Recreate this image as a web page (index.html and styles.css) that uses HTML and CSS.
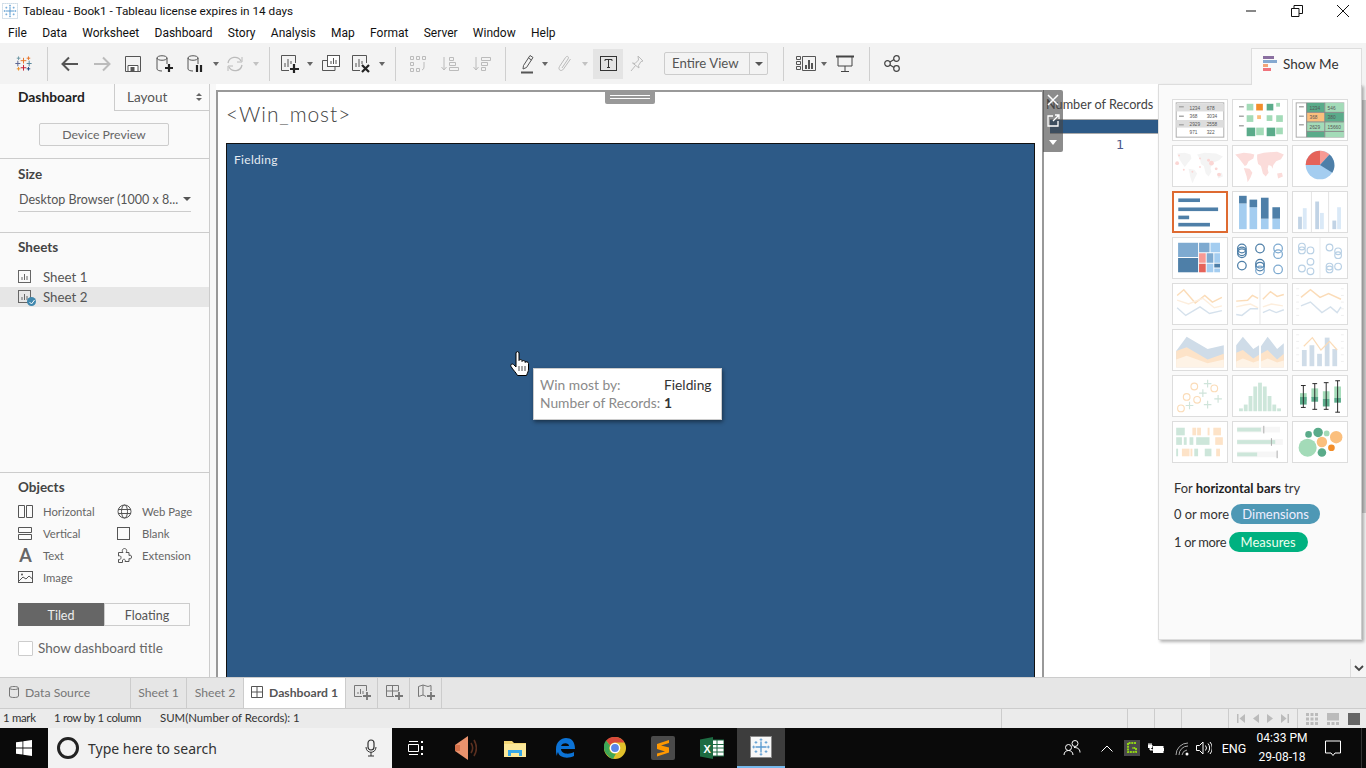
FILE: index.html
```html
<!DOCTYPE html>
<html lang="en">
<head>
<meta charset="utf-8">
<title>Tableau - Book1</title>
<link rel="stylesheet" href="styles.css">
</head>
<body>
<svg class="defs" width="0" height="0">
  <defs>
    <symbol id="sheetico" viewBox="0 0 14 14"><rect x=".5" y=".5" width="12" height="12" fill="none" stroke="#666"/><path d="M4 10V7M6.500 10V4M9 10V6" stroke="#666" fill="none"/></symbol>
    <symbol id="flake" viewBox="0 0 24 24">
      <g fill="none" stroke="#5b9bd0"><path d="M12 6v12M6 12h12" stroke-width="1.500"/><path d="M12 2.500v3M10.500 4h3M12 18.500v3M10.500 20h3M2.500 12h3M4 10.500v3M18.500 12h3M20 10.500v3M6.500 5.500v3M5 7h3M17.500 5.500v3M16 7h3M6.500 15.500v3M5 17h3M17.500 15.500v3M16 17h3"/></g>
    </symbol>
  </defs>
</svg>

<header class="titlebar">
  <svg class="appicon" width="16" height="16" viewBox="0 0 24 24"><rect x=".7" y=".7" width="22.600" height="22.600" fill="#fff" stroke="#9db9cf" stroke-dasharray="2 1"/><use href="#flake"/></svg>
  <span class="apptitle">Tableau - Book1 - Tableau license expires in 14 days</span>
  <div class="winbtns">
    <span class="winbtn"><svg width="12" height="12" viewBox="0 0 12 12"><path d="M1 6h10" stroke="#111"/></svg></span>
    <span class="winbtn"><svg width="12" height="12" viewBox="0 0 12 12"><path d="M.5 3.500h7.500v8H.5zM3 3.500V.5h8.500v8H8" fill="none" stroke="#111"/></svg></span>
    <span class="winbtn"><svg width="14" height="14" viewBox="0 0 14 14"><path d="M1 1l12 12M13 1L1 13" stroke="#111"/></svg></span>
  </div>
</header>

<nav class="menubar">
  <span>File</span><span>Data</span><span>Worksheet</span><span>Dashboard</span><span>Story</span><span>Analysis</span><span>Map</span><span>Format</span><span>Server</span><span>Window</span><span>Help</span>
</nav>

<div class="toolbar">
  <span class="tb w40"><svg width="17" height="17" viewBox="0 0 24 24"><g fill="none" stroke-width="1.400"><path d="M12 4v8M8 8h8" stroke="#e8762b"/><path d="M12 14v8M8 18h8" stroke="#c72035"/><path d="M4 8v8M0.500 12h7" stroke="#5b6591"/><path d="M20 8v8M16.500 12h7" stroke="#59879b"/><path d="M5 2v5M2.500 4.500h5" stroke="#7099a6"/><path d="M19 2v5M16.500 4.500h5" stroke="#e8762b"/><path d="M5 17v5M2.500 19.500h5" stroke="#eb912b"/><path d="M19 17v5M16.500 19.500h5" stroke="#1f447e"/></g></svg></span>
  <span class="sep"></span>
  <span class="tb w36"><svg width="18" height="16" viewBox="0 0 18 16"><path d="M17 8H2M8 1.500L1.500 8 8 14.500" fill="none" stroke="#555" stroke-width="2"/></svg></span>
  <span class="tb w28 off"><svg width="18" height="16" viewBox="0 0 18 16"><path d="M1 8h15M10 1.500L16.500 8 10 14.500" fill="none" stroke="#555" stroke-width="2"/></svg></span>
  <span class="tb w34"><svg width="16" height="16" viewBox="0 0 16 16"><path d="M.5.500h15v15H.5z" fill="none" stroke="#555"/><path d="M3 9.500h10V15.500H3z" fill="#fff" stroke="#555"/><rect x="5.500" y="11" width="4" height="4" fill="#555"/></svg></span>
  <span class="tb w30"><svg width="18" height="18" viewBox="0 0 18 18"><path d="M1 3c0-3 10-3 10 0v6M1 3c0 3 10 3 10 0M1 3v11c0 1 2 2 5 2" fill="none" stroke="#555"/><path d="M13 9v8M9 13h8" stroke="#222" stroke-width="2.200"/></svg></span>
  <span class="tb w32"><svg width="18" height="18" viewBox="0 0 18 18"><path d="M1 3c0-3 10-3 10 0v6M1 3c0 3 10 3 10 0M1 3v11c0 1 2 2 5 2" fill="none" stroke="#555"/><path d="M10 10v7M14 10v7" stroke="#222" stroke-width="2.200"/></svg></span>
  <span class="tb w8"><i class="caret"></i></span>
  <span class="tb w30 off"><svg width="18" height="16" viewBox="0 0 18 16"><path d="M2 7a7 7 0 0 1 13-2M16 9a7 7 0 0 1-13 2" fill="none" stroke="#555" stroke-width="1.300"/><path d="M16 1v5h-5M2 15v-5h5" fill="none" stroke="#555"/></svg></span>
  <span class="tb w12 off"><i class="caret"></i></span>
  <span class="g3"></span><span class="sep"></span>
  <span class="tb w32"><svg width="18" height="18" viewBox="0 0 18 18"><path d="M8 15.500H.5v-15h14V8" fill="none" stroke="#555"/><path d="M4 12V8M7 12V4M10 9V6" stroke="#555" fill="none"/><path d="M13 9v9M9 14h9" stroke="#222" stroke-width="2.200"/></svg></span>
  <span class="tb w8"><i class="caret"></i></span>
  <span class="g2"></span>
  <span class="tb w30"><svg width="18" height="18" viewBox="0 0 18 18"><rect x="5.500" y=".5" width="12" height="11" fill="#fff" stroke="#555"/><path d="M9 9V6M11.500 9V3M14 9V5" stroke="#555"/><path d="M5 5.500H.5V15.500H13V12" fill="none" stroke="#555"/></svg></span>
  <span class="tb w30"><svg width="18" height="18" viewBox="0 0 18 18"><path d="M8 15.500H.5v-15h14V8" fill="none" stroke="#555"/><path d="M4 12V8M7 12V4M10 9V6" stroke="#555" fill="none"/><path d="M10 10l7 7M17 10l-7 7" stroke="#222" stroke-width="2.200"/></svg></span>
  <span class="g2"></span>
  <span class="tb w8"><i class="caret"></i></span>
  <span class="g5"></span><span class="sep"></span>
  <span class="tb w36 off"><svg width="18" height="18" viewBox="0 0 18 18"><path d="M1.500 1.500h3v3h-3zM7.500 1.500h3v3h-3zM13.500 1.500h3v3h-3zM1.500 7.500h3v3h-3zM1.500 13.500h3v3h-3zM7.500 13.500h3v3h-3z" fill="none" stroke="#555"/><path d="M15 7v5a3 3 0 0 1-2 3" fill="none" stroke="#555"/></svg></span>
  <span class="tb w28 off"><svg width="18" height="16" viewBox="0 0 18 16"><path d="M3 1v13M.5 11L3 14l2.500-3" fill="none" stroke="#555"/><path d="M8.500 1.500h4v3h-4zM8.500 6.500h6v3h-6zM8.500 11.500h9v3h-9z" fill="none" stroke="#555"/></svg></span>
  <span class="tb w36 off"><svg width="18" height="16" viewBox="0 0 18 16"><path d="M3 1v13M.5 11L3 14l2.500-3" fill="none" stroke="#555"/><path d="M8.500 1.500h9v3h-9zM8.500 6.500h6v3h-6zM8.500 11.500h4v3h-4z" fill="none" stroke="#555"/></svg></span>
  <span class="g1"></span><span class="sep"></span>
  <span class="g5"></span>
  <span class="tb w26"><svg width="14" height="20" viewBox="0 0 14 20"><path d="M9 1.500l3 2-6.500 10-3.500 1.500.500-3.500zM7.500 4l3 2" fill="none" stroke="#555"/><rect x="0" y="17.500" width="12" height="2" fill="#555"/></svg></span>
  <span class="tb w8"><i class="caret"></i></span>
  <span class="tb w32 off"><svg width="14" height="18" viewBox="0 0 14 18"><path d="M4 13l6-9c1.500-2.500-1-3.500-2.500-1.500L1.500 11.500c-2 3.500 2 5.500 4 2.500l7-10" fill="none" stroke="#555"/></svg></span>
  <span class="tb w8 off"><i class="caret"></i></span>
  <span class="g4"></span>
  <span class="tb w30 active"><svg width="17" height="15" viewBox="0 0 17 15"><rect x=".5" y=".5" width="16" height="14" fill="none" stroke="#333"/><path d="M5 5V3.500h7V5M8.500 3.500v8M7 11.500h3" fill="none" stroke="#333"/></svg></span>
  <span class="tb w28 off"><svg width="14" height="18" viewBox="0 0 14 18"><path d="M8 1l5 5-2 .5-2.500 4 .5 2.500L2.500 8 5 8.500l3.500-3.500zM5.500 10.500L1 16" fill="none" stroke="#555"/></svg></span>
  <span class="g13"></span>
  <div class="fitbox"><span class="fitlabel">Entire View</span><span class="fitarrow"><i class="caret dark"></i></span></div>
  <span class="g11"></span><span class="sep"></span>
  <span class="g4"></span>
  <span class="tb w28"><svg width="20" height="15" viewBox="0 0 20 15"><path d="M.5.500h4v3h-4zM.5 5.500h4v3h-4zM.5 10.500h4v3h-4zM6.500.500h13v14h-13z" fill="none" stroke="#555"/><path d="M10 13V9M13 13V4M16 13V7" stroke="#555" stroke-width="2"/></svg></span>
  <span class="tb w8"><i class="caret"></i></span>
  <span class="tb w34"><svg width="18" height="17" viewBox="0 0 18 17"><path d="M0 1.500h18" stroke="#444" stroke-width="2"/><path d="M2 1.500v9.500h14V1.500M9 11v5M5 16.500h8" fill="none" stroke="#444"/></svg></span>
  <span class="g3"></span><span class="sep"></span>
  <span class="tb w36"><svg width="16" height="17" viewBox="0 0 16 17"><circle cx="3.500" cy="8.500" r="2.800" fill="none" stroke="#444" stroke-width="1.200"/><circle cx="12.500" cy="3.500" r="2.800" fill="none" stroke="#444" stroke-width="1.200"/><circle cx="12.500" cy="13.500" r="2.800" fill="none" stroke="#444" stroke-width="1.200"/><path d="M6 7l4-2.500M6 10l4 2.500" stroke="#444" stroke-width="1.200"/></svg></span>
</div>

<main class="workspace">
  <aside class="sidebar">
    <div class="sidetabs">
      <span class="sidetab current">Dashboard</span>
      <span class="sidetab other">Layout<i class="updown"></i></span>
    </div>
    <section class="sec device"><span class="devbtn">Device Preview</span></section>
    <section class="sec size">
      <h3>Size</h3>
      <div class="sizepick"><span>Desktop Browser (1000 x 8...</span><i class="caret dark"></i></div>
    </section>
    <section class="sec sheets">
      <h3>Sheets</h3>
      <ul class="sheetlist">
        <li><svg width="14" height="14"><use href="#sheetico"/></svg>Sheet 1</li>
        <li class="sel"><span class="sheetwrap"><svg width="14" height="14"><use href="#sheetico"/></svg><i class="check"><svg width="8" height="8" viewBox="0 0 8 8"><path d="M1.500 4l2 2 3-4" fill="none" stroke="#fff"/></svg></i></span>Sheet 2</li>
      </ul>
    </section>
    <section class="objects">
      <h3>Objects</h3>
      <div class="objgrid">
        <span class="obj"><svg width="15" height="13" viewBox="0 0 15 13"><path d="M.5.500h6v12h-6zM8.500.500h6v12h-6z" fill="none" stroke="#555"/></svg>Horizontal</span>
        <span class="obj"><svg width="15" height="15" viewBox="0 0 15 15"><circle cx="7.500" cy="7.500" r="6.500" fill="none" stroke="#555"/><ellipse cx="7.500" cy="7.500" rx="3" ry="6.500" fill="none" stroke="#555"/><path d="M1 5.500h13M1 9.500h13" stroke="#555"/></svg>Web Page</span>
        <span class="obj"><svg width="15" height="13" viewBox="0 0 15 13"><path d="M.5.500h13v5h-13zM.5 7.500h13v5h-13z" fill="none" stroke="#555"/></svg>Vertical</span>
        <span class="obj"><svg width="15" height="13" viewBox="0 0 15 13"><rect x=".5" y=".5" width="12" height="12" fill="none" stroke="#555"/></svg>Blank</span>
        <span class="obj"><b class="aglyph">A</b>Text</span>
        <span class="obj"><svg width="15" height="15" viewBox="0 0 15 15"><path d="M1.500 4.500H6C4.500 3 5.500.5 7.500.5S10.500 3 9 4.500h3v3c1.500-1 2.500 0 2.500 1.500s-1 2.500-2.500 1.500v3H8c1-2-1-3-2.500-1.500V14.500H1.500v-3c1.500.5 2.500-.5 2.500-2s-1-2-2.500-1.500z" fill="none" stroke="#555"/></svg>Extension</span>
        <span class="obj"><svg width="15" height="13" viewBox="0 0 15 13"><rect x=".5" y=".5" width="14" height="11" fill="none" stroke="#555"/><path d="M1 10l4-4 3 2 3-3 3.500 3" fill="none" stroke="#555"/><circle cx="4" cy="3.500" r="1" fill="#555"/></svg>Image</span>
      </div>
      <div class="segment"><span class="seg on">Tiled</span><span class="seg">Floating</span></div>
      <label class="showtitle"><i class="box"></i>Show dashboard title</label>
    </section>
  </aside>

  <div class="gutter"></div>

  <div class="dash">
    <div class="dashhandle"><i></i><i></i></div>
    <h1 class="dashtitle">&lt;Win_most&gt;</h1>
    <div class="viz"><span class="vizlabel">Fielding</span></div>
  </div>

  <div class="legendcol">
    <div class="legendhead">Number of Records</div>
    <div class="legendbar"></div>
    <div class="legendval">1</div>
  </div>

  <div class="rightcol">
    <span class="scrollthumb"></span>
    <span class="scrolldown"><svg width="10" height="7" viewBox="0 0 10 7"><path d="M1 1l4 4 4-4" fill="none" stroke="#444" stroke-width="1.800"/></svg></span>
  </div>

  <div class="floatctl">
    <svg width="14" height="14" viewBox="0 0 14 14"><path d="M2 2l10 10M12 2L2 12" stroke="#fff" stroke-width="1.500"/></svg>
    <svg width="13" height="13" viewBox="0 0 13 13"><path d="M6 2H1v10h10V7M6 7l6-6M8 1h4v4" fill="none" stroke="#fff" stroke-width="1.300"/></svg>
    <svg width="10" height="6" viewBox="0 0 10 6"><path d="M1 0h8L5 5z" fill="#fff"/></svg>
  </div>

  <div class="tooltip">
    <span class="tk">Win most by:</span><span class="tv">Fielding</span>
    <span class="tk">Number of Records:</span><span class="tv strong">1</span>
  </div>

  <svg class="handcursor" width="20" height="26" viewBox="0 0 20 26"><path d="M6 2c0-1.800 3-1.800 3 0v7.500c.5-1.200 3-1.200 3 0v1c.5-1.200 3-1.200 3 0v1c.5-1.200 3.500-1 3.500 1V18c0 2.500-1 3.500-2 6.500H7.500C6 21.500 3 19 1 15.500c-1-2 1-3.200 2.500-2L6 16z" fill="#fff" stroke="#000"/><path d="M9 15v5M12 15v5M15 15v5" stroke="#000" stroke-width=".7"/></svg>

  <div class="showme">
    <div class="showmetab">
      <svg width="15" height="15" viewBox="0 0 15 15"><rect y="0" width="11" height="3" fill="#8a6fa0"/><rect y="4" width="14" height="3" fill="#86a9d0"/><rect y="8" width="5" height="3" fill="#f2a477"/><rect y="12" width="8" height="3" fill="#f0737c"/></svg>
      <span>Show Me</span>
    </div>
    <div class="thumbs">
      <span class="thumb"><svg viewBox="0 0 56 42"><rect x="3" y="3" width="50" height="36" fill="#fff" stroke="#aaa"/><rect x="3" y="4" width="50" height="8" fill="#ddd"/><rect x="3" y="21" width="50" height="8" fill="#ddd"/><path d="M6 7h5M6 17h5M6 26h5" stroke="#aaa" stroke-width="1.500"/><g class="tiny"><text x="17" y="10">1234</text><text x="35" y="10">678</text><text x="17" y="19">368</text><text x="35" y="19">3034</text><text x="17" y="27">2929</text><text x="35" y="27">2558</text><text x="17" y="36">971</text><text x="35" y="36">322</text></g></svg></span>
      <span class="thumb"><svg viewBox="0 0 56 42"><path d="M6 7h5M6 17h5M6 27h5" stroke="#aaa" stroke-width="1.500"/><rect x="14" y="4" width="7" height="7" fill="#a3dbb8"/><rect x="24" y="4" width="7" height="7" fill="#f28e2b"/><rect x="35" y="4" width="7" height="7" fill="#5aab8a"/><rect x="45" y="3" width="4" height="4" fill="#a3dbb8"/><rect x="14" y="16" width="7" height="7" fill="#a3dbb8"/><rect x="25" y="16" width="4" height="4" fill="#fbbf7d"/><rect x="35" y="16" width="6" height="6" fill="#a3dbb8"/><rect x="45" y="16" width="7" height="7" fill="#a3dbb8"/><rect x="14" y="29" width="9" height="9" fill="#5aab8a"/><rect x="24" y="29" width="8" height="8" fill="#a3dbb8"/><rect x="35" y="29" width="9" height="9" fill="#5aab8a"/><rect x="45" y="29" width="7" height="7" fill="#a3dbb8"/></svg></span>
      <span class="thumb"><svg viewBox="0 0 56 42"><rect x="3" y="3" width="50" height="36" fill="#fff" stroke="#aaa"/><path d="M6 7h5M6 17h5M6 26h5" stroke="#aaa" stroke-width="1.500"/><rect x="14" y="3" width="19" height="10" fill="#5aab8a"/><rect x="33" y="3" width="20" height="10" fill="#a3dbb8"/><rect x="14" y="13" width="19" height="10" fill="#fbbf7d"/><rect x="33" y="13" width="20" height="10" fill="#5aab8a"/><rect x="14" y="23" width="19" height="10" fill="#a3dbb8"/><rect x="33" y="23" width="20" height="10" fill="#a3dbb8"/><rect x="14" y="33" width="19" height="6" fill="#5aab8a"/><rect x="33" y="33" width="20" height="6" fill="#a3dbb8"/><path d="M33 3v36M14 3v36M14 13h39M14 23h39M14 33h39" stroke="#888"/><g class="tiny"><text x="17" y="10">1234</text><text x="36" y="10">546</text><text x="17" y="20">368</text><text x="36" y="20">380</text><text x="17" y="30">2629</text><text x="36" y="30">15660</text></g></svg></span>

      <span class="thumb"><svg viewBox="0 0 56 42"><path d="M4 8l8-1 6 2 1 4-4 5-3 4-3-4-3-5zM16 24l6 1 3 4-3 6-2 4-2-6zM25 9l8-2 12 1 7 3-4 4-5 2-2 1-2 5 1 4-3 5-3-3-2-8-3-2-1-5zM46 29l5-1 1 4-5 2z" fill="#f4f4f4"/><g fill="#fbd6d4"><circle cx="4" cy="18" r="2"/><circle cx="6" cy="10" r="1"/><circle cx="11" cy="25" r="1"/><circle cx="20" cy="27" r="1"/><circle cx="28" cy="13" r="1"/><circle cx="28" cy="22" r="1"/><circle cx="37" cy="15" r="1.500"/><circle cx="40" cy="18" r="2.500"/><circle cx="45" cy="24" r="1.500"/><circle cx="48" cy="30" r="2"/></g></svg></span>
      <span class="thumb"><svg viewBox="0 0 56 42"><path d="M2 9l9-2 7 1 4 1-1 4-5 3-2 4-2 1-3-4-3-4zM11 23l6 1 3 4-2 5-3 5-1-6zM25 9l7-2 14-1 7 3-3 5-5 2-3 4-1 4-1-3-3-1-1 4 1 4-3 4-3-3-2-8-3-2-1-5zM46 29l5-1 1 4-5 2z" fill="#fbdcda"/></svg></span>
      <span class="thumb"><svg viewBox="0 0 56 42"><circle cx="28" cy="20" r="15" fill="#a4cdf0"/><path d="M28 20L13 20A15 15 0 0 1 28 5z" fill="#e5635a"/><path d="M28 20V5A15 15 0 0 1 38 9z" fill="#f89a94"/><path d="M28 20L38 9A15 15 0 0 1 41 28z" fill="#4e7fa8"/></svg></span>

      <span class="thumb picked"><svg viewBox="0 0 56 42"><g fill="#4e7fa8"><rect x="4" y="6" width="24" height="4"/><rect x="4" y="16" width="44" height="4"/><rect x="4" y="25" width="12" height="4"/><rect x="4" y="33" width="35" height="4"/></g></svg></span>
      <span class="thumb"><svg viewBox="0 0 56 42"><g fill="#a4cdf0"><rect x="6" y="12" width="8" height="27"/><rect x="17" y="16" width="8" height="23"/><rect x="29" y="28" width="8" height="11"/><rect x="41" y="28" width="8" height="11"/></g><g fill="#4e7fa8"><rect x="6" y="4" width="8" height="8"/><rect x="17" y="8" width="8" height="8"/><rect x="29" y="6" width="8" height="22"/><rect x="41" y="16" width="8" height="12"/></g></svg></span>
      <span class="thumb faint"><svg viewBox="0 0 56 42"><path d="M19 0v42M37 0v42" stroke="#ccc"/><g fill="#8fb0d0"><rect x="5" y="26" width="4" height="13"/><rect x="23" y="10" width="4" height="29"/><rect x="41" y="30" width="4" height="9"/></g><g fill="#bcd8f2"><rect x="10" y="17" width="4" height="22"/><rect x="28" y="22" width="4" height="17"/><rect x="46" y="16" width="4" height="23"/></g></svg></span>

      <span class="thumb"><svg viewBox="0 0 56 42"><rect x="5" y="5" width="21" height="15" fill="#7eaad0"/><rect x="5" y="21" width="21" height="15" fill="#4e7fa8"/><rect x="27" y="5" width="11" height="10" fill="#7eaad0"/><rect x="39" y="5" width="10" height="10" fill="#a4cdf0"/><rect x="27" y="16" width="7" height="10" fill="#f89a94"/><rect x="35" y="16" width="7" height="10" fill="#7eaad0"/><rect x="43" y="16" width="6" height="10" fill="#a4cdf0"/><rect x="27" y="27" width="7" height="9" fill="#e5635a"/><rect x="35" y="27" width="7" height="9" fill="#a4cdf0"/><rect x="43" y="27" width="6" height="4" fill="#4e7fa8"/><rect x="43" y="32" width="6" height="4" fill="#a4cdf0"/></svg></span>
      <span class="thumb"><svg viewBox="0 0 56 42"><g fill="none" stroke-width="1.300"><g stroke="#4e7fa8"><circle cx="9" cy="11" r="4.500"/><circle cx="9" cy="14" r="4.500"/><circle cx="9" cy="16" r="4.500"/><circle cx="9" cy="29" r="4.500"/><circle cx="28" cy="11" r="4.500"/><circle cx="28" cy="27" r="4.500"/><circle cx="28" cy="30" r="4.500"/></g><g stroke="#7eaad0"><circle cx="47" cy="11" r="4.500"/><circle cx="47" cy="17" r="4.500"/><circle cx="47" cy="33" r="4.500"/><circle cx="28" cy="34" r="4.500"/></g></g></svg></span>
      <span class="thumb faint"><svg viewBox="0 0 56 42"><path d="M28 0v42" stroke="#ddd"/><g fill="none" stroke="#7eaad0" stroke-width="1.200"><circle cx="9" cy="9" r="3.500"/><circle cx="9" cy="13" r="3.500"/><circle cx="18" cy="13" r="3.500"/><circle cx="18" cy="25" r="3.500"/><circle cx="9" cy="32" r="3.500"/><circle cx="18" cy="35" r="3.500"/><circle cx="38" cy="10" r="3.500"/><circle cx="47" cy="14" r="3.500"/><circle cx="47" cy="18" r="3.500"/><circle cx="38" cy="30" r="3.500"/><circle cx="38" cy="33" r="3.500"/><circle cx="47" cy="30" r="3.500"/></g></svg></span>

      <span class="thumb"><svg viewBox="0 0 56 42"><g fill="none" class="softln"><path d="M4 12l7-6 12 14 10-8 8 7 10-5" stroke="#fbdcb8"/><path d="M4 17l12 4 15-6 12 10 8-2" stroke="#fdeedd"/><path d="M4 25l9 8 15-9 10 7 13-3" stroke="#d5e1ec"/></g></svg></span>
      <span class="thumb"><svg viewBox="0 0 56 42"><path d="M28 0v42" stroke="#e5e5e5"/><g fill="none" class="softln"><path d="M3 18l12-1 5-5 6 3M31 16l8-8 7 5 7-2" stroke="#fbdcb8"/><path d="M3 24l9-2 6-1 8 4M31 24l9-3 12 2" stroke="#fdeedd"/><path d="M3 32l6 1 9-7 8 0M31 30l7-3 7 3 8-3" stroke="#d5e1ec"/></g></svg></span>
      <span class="thumb"><svg viewBox="0 0 56 42"><path d="M3 5h3M3 12h3M3 19h3M3 26h3M3 33h3M50 5h3M50 12h3M50 19h3M50 26h3M50 33h3" stroke="#eee"/><g fill="none" class="softln"><path d="M8 14l10-8 10 8 9-4 13 6" stroke="#fbdcb8"/><path d="M8 23l10-4 12 11 9-6 7 6 4-6" stroke="#d5e1ec"/></g></svg></span>

      <span class="thumb"><svg viewBox="0 0 56 42"><path d="M3 22L14 7l22 13 17-4v23H3z" fill="#cfdce8"/><path d="M3 22l11-4 22 13 17-6v14H3z" fill="#fde3c8"/><path d="M3 31l11-4 22 8 17-4v8H3z" fill="#fef3e6"/></svg></span>
      <span class="thumb"><svg viewBox="0 0 56 42"><path d="M3 16l7-9 11 13 6-4v23H3zM29 17l7-10 10 13 7-6v25H29z" fill="#cfdce8"/><path d="M3 24l7-3 11 9 6-4v13H3zM29 25l7-4 10 10 7-6v14H29z" fill="#fde3c8"/><path d="M3 33l7-3 11 4 6-2v7H3zM29 33l7-3 10 4 7-2v7H29z" fill="#fef3e6"/></svg></span>
      <span class="thumb"><svg viewBox="0 0 56 42"><path d="M3 5h3M3 12h3M3 19h3M3 26h3M3 33h3M50 5h3M50 12h3M50 19h3M50 26h3M50 33h3" stroke="#eee"/><g fill="#cfdce8"><rect x="9" y="21" width="5" height="17"/><rect x="17" y="16" width="5" height="22"/><rect x="25" y="25" width="5" height="13"/><rect x="33" y="8" width="5" height="30"/><rect x="41" y="20" width="5" height="18"/></g><path d="M11 17l9-9 9 13 9-9 8 9" fill="none" stroke="#fbdcb8" stroke-width="1.300"/></svg></span>

      <span class="thumb"><svg viewBox="0 0 56 42"><g fill="none" stroke="#fbdcb8" stroke-width="1.200"><circle cx="8" cy="34" r="3.500"/><circle cx="14" cy="22" r="3.500"/><circle cx="25" cy="25" r="3.500"/><circle cx="22" cy="11" r="3.500"/><circle cx="43" cy="13" r="3.500"/></g><path d="M36 4v8M32 8h8M31 14v8M27 18h8M36 26v8M32 30h8M47 20v8M43 24h8M17 27v8M13 31h8" stroke="#cfe4da" stroke-width="1.200"/></svg></span>
      <span class="thumb"><svg viewBox="0 0 56 42"><g fill="#cde6da"><rect x="6" y="34" width="4" height="3"/><rect x="11" y="30" width="4" height="7"/><rect x="16" y="21" width="4" height="16"/><rect x="21" y="11" width="4" height="26"/><rect x="26" y="7" width="4" height="30"/><rect x="31" y="11" width="4" height="26"/><rect x="36" y="21" width="4" height="16"/><rect x="41" y="30" width="4" height="7"/><rect x="46" y="34" width="4" height="3"/></g></svg></span>
      <span class="thumb"><svg viewBox="0 0 56 42"><rect x="7" y="18" width="7" height="8" fill="#a3dbb8"/><rect x="7" y="22" width="7" height="8" fill="#5aab8a"/><rect x="19" y="13" width="7" height="10" fill="#a3dbb8"/><rect x="19" y="22" width="7" height="5" fill="#5aab8a"/><rect x="31" y="16" width="7" height="8" fill="#a3dbb8"/><rect x="31" y="24" width="7" height="8" fill="#5aab8a"/><rect x="43" y="11" width="7" height="12" fill="#a3dbb8"/><rect x="43" y="23" width="7" height="5" fill="#5aab8a"/><path d="M10.500 10v23M8 10h5M8 33h5M22.500 8v27M20 8h5M20 35h5M34.500 7v28M32 7h5M32 35h5M46.500 5v33M44 5h5M44 38h5" stroke="#222" fill="none"/></svg></span>

      <span class="thumb"><svg viewBox="0 0 56 42"><g fill="#cde6da"><rect x="3" y="6" width="9" height="8"/><rect x="3" y="16" width="6" height="8"/><rect x="11" y="16" width="3" height="8"/><rect x="17" y="16" width="4" height="8"/><rect x="24" y="16" width="14" height="8"/><rect x="3" y="28" width="2" height="8"/><rect x="22" y="28" width="4" height="8"/><rect x="33" y="28" width="7" height="8"/></g><g fill="#fde3c8"><rect x="20" y="6" width="4" height="8"/><rect x="25" y="6" width="4" height="8"/><rect x="36" y="6" width="2" height="8"/><rect x="42" y="6" width="8" height="8"/><rect x="44" y="16" width="8" height="8"/><rect x="9" y="28" width="8" height="8"/><rect x="18" y="28" width="2" height="8"/><rect x="45" y="28" width="4" height="8"/></g></svg></span>
      <span class="thumb"><svg viewBox="0 0 56 42"><g fill="#f6f6f6"><rect x="4" y="5" width="45" height="6"/><rect x="4" y="18" width="48" height="6"/><rect x="4" y="31" width="42" height="6"/></g><g fill="#cde6da"><rect x="4" y="6" width="25" height="4"/><rect x="4" y="19" width="40" height="4"/><rect x="4" y="32" width="21" height="4"/></g><path d="M32 4v8M40 17v8M46 30v8" stroke="#aaa"/></svg></span>
      <span class="thumb"><svg viewBox="0 0 56 42"><circle cx="15" cy="27" r="9.500" fill="#a3dbb8"/><circle cx="26" cy="11" r="5" fill="#5aab8a"/><circle cx="16" cy="13" r="3.500" fill="#5aab8a"/><circle cx="35" cy="12" r="3" fill="#a3dbb8"/><circle cx="45" cy="16" r="6.500" fill="#fbbf7d"/><circle cx="30" cy="21" r="5.500" fill="#fbbf7d"/><circle cx="30" cy="32" r="4.500" fill="#5aab8a"/><circle cx="40" cy="27" r="3.500" fill="#f28e2b"/></svg></span>
    </div>
    <div class="hint">
      <p class="lead">For <b>horizontal bars</b> try</p>
      <p>0 or more <span class="pill blue">Dimensions</span></p>
      <p><span class="tight">1 or more</span> <span class="pill green">Measures</span></p>
    </div>
  </div>
</main>

<div class="tabsbar">
  <span class="wtab ds"><svg width="10" height="12" viewBox="0 0 10 12"><path d="M.5 2c0-2 9-2 9 0v8c0 2-9 2-9 0zM.5 2c0 2 9 2 9 0" fill="none" stroke="#777"/></svg>Data Source</span>
  <span class="wtab s1">Sheet 1</span>
  <span class="wtab s2">Sheet 2</span>
  <span class="wtab cur"><svg width="12" height="12" viewBox="0 0 12 12"><path d="M.5.500h11v11H.5zM6 .5v11M.5 6h11" fill="none" stroke="#555"/></svg>Dashboard 1</span>
  <span class="wtab add"><svg width="18" height="16" viewBox="0 0 18 16"><path d="M8 12.500H.5v-11h12V7" fill="none" stroke="#777"/><path d="M4 10V8M6.500 10V5M9 10V7" stroke="#777"/><path d="M13 8v8M9 12h8" stroke="#777" stroke-width="1.800"/></svg></span>
  <span class="wtab add"><svg width="18" height="16" viewBox="0 0 18 16"><path d="M8 12.500H.5v-11h12V7M6.500 1.500v11M.5 7h12" fill="none" stroke="#777"/><path d="M13 8v8M9 12h8" stroke="#777" stroke-width="1.800"/></svg></span>
  <span class="wtab add"><svg width="18" height="16" viewBox="0 0 18 16"><path d="M8 12.500l-3-1.500-4.500 1.500v-10L5 1l5 1.500 3-1V7M5 1v10" fill="none" stroke="#777"/><path d="M13 8v8M9 12h8" stroke="#777" stroke-width="1.800"/></svg></span>
</div>

<div class="statusbar">
  <span class="st m">1 mark</span><span class="st r">1 row by 1 column</span><span class="st s">SUM(Number of Records): 1</span>
  <span class="stfill"></span>
  <span class="stcell c1"></span><span class="stcell c2"></span><span class="stcell c3"></span><span class="stcell c4"></span>
  <span class="stnav">
    <svg width="8" height="9" viewBox="0 0 8 9"><path d="M0 0h1.500v9H0zM8 0v9L2.500 4.500z" fill="#bbb"/></svg>
    <svg width="6" height="9" viewBox="0 0 6 9"><path d="M6 0v9L0 4.500z" fill="#bbb"/></svg>
    <svg width="6" height="9" viewBox="0 0 6 9"><path d="M0 0v9l6-4.500z" fill="#bbb"/></svg>
    <svg width="8" height="9" viewBox="0 0 8 9"><path d="M6.500 0H8v9H6.500zM0 0v9l5.500-4.500z" fill="#bbb"/></svg>
  </span>
  <span class="stviews">
    <svg width="12" height="12" viewBox="0 0 12 12"><path d="M0 0h3v3H0zM4.500 0h3v3h-3zM9 0h3v3H9zM0 4.500h3v3H0zM4.500 4.500h3v3h-3zM9 4.500h3v3H9zM0 9h3v3H0zM4.500 9h3v3h-3zM9 9h3v3H9z" fill="#bbb"/></svg>
    <svg width="12" height="12" viewBox="0 0 12 12"><path d="M0 0h12v7.500H0zM0 9h3v3H0zM4.500 9h3v3h-3zM9 9h3v3H9z" fill="#bbb"/></svg>
    <svg width="12" height="12" viewBox="0 0 12 12"><rect width="12" height="12" fill="#666"/></svg>
  </span>
</div>

<footer class="taskbar">
  <span class="start"><svg width="16" height="16" viewBox="0 0 16 16"><path d="M0 2.300l6.500-.9v6.200H0zM7.300 1.300L16 0v7.600H7.300zM0 8.400h6.500v6.200L0 13.700zM7.300 8.400H16V16l-8.700-1.200z" fill="#fff"/></svg></span>
  <div class="search">
    <i class="cortana"></i>
    <span class="searchtext">Type here to search</span>
    <svg class="mic" width="12" height="18" viewBox="0 0 12 18"><rect x="3" y="1" width="6" height="10" rx="3" fill="none" stroke="#333" stroke-width="1.200"/><path d="M1 8c0 7 10 7 10 0M6 13v4M3 17h6" fill="none" stroke="#333"/></svg>
  </div>
  <span class="task t1"><svg width="16" height="16" viewBox="0 0 16 16"><path d="M.5 4.500h10v7H.5zM1 1.500h9M1 14.500h9" fill="none" stroke="#fff"/><path d="M13 1h2v2h-2zM13 6h2v4h-2zM13 13h2v2h-2z" fill="#fff"/></svg></span>
  <span class="task t2"><svg width="22" height="26" viewBox="0 0 22 26"><path d="M0 10l13-9v24L0 16z" fill="#e8926d"/><path d="M0 10h5v6H0z" fill="#d5714a"/><path d="M16 8c2 3 2 7 0 10M19 5c3 5 3 11 0 16" fill="none" stroke="#5b3020" stroke-width="1.600"/></svg></span>
  <span class="task t3"><svg width="22" height="18" viewBox="0 0 22 18"><path d="M0 2h8l2 2h12v14H0z" fill="#f3d674"/><path d="M0 5h22v13H0z" fill="#fbe89a"/><path d="M4 17v-6h14v6h-3v-3H7v3z" fill="#35a7e8"/></svg></span>
  <span class="task t4"><svg width="20" height="20" viewBox="0 0 20 20"><path d="M1 11C1 4 6 0 11 0c5 0 9 3 9 11H6c0 5 8 6 13 3v4c-6 3-15 2-16-4-1 2-1 3-1 4-1-2-1-4-1-7zm5-3h8c0-3-6-4-8 0z" fill="#0c73d6"/></svg></span>
  <span class="task t5"><svg width="22" height="22" viewBox="0 0 22 22"><circle cx="11" cy="11" r="11" fill="#e1c02b"/><path d="M11 0a11 11 0 0 1 9.500 5.500H11a5.500 5.500 0 0 0-5 3L2 3.500A11 11 0 0 1 11 0z" fill="#d84a3b"/><path d="M2 3.500l4 5c-1 2-1 4 0 5.500l-1.500 5A11 11 0 0 1 2 3.500z" fill="#3ea757"/><path d="M6 14c1.500 2.500 4 3 6 2.500L9 22a11 11 0 0 1-5-3z" fill="#3ea757"/><circle cx="11" cy="11" r="4.600" fill="#5a86e8" stroke="#fff" stroke-width="1.400"/></svg></span>
  <span class="task t6"><svg width="24" height="24" viewBox="0 0 24 24"><rect width="24" height="24" rx="2" fill="#4a4a4a"/><path d="M18 4L6 8v5l8 2.500L6 17.500v3l12-4v-5L10 9.500 18 7z" fill="#ff9800"/></svg></span>
  <span class="task t7"><svg width="24" height="22" viewBox="0 0 24 22"><rect x="12" y="3" width="12" height="16" fill="#fff" stroke="#1d6b42"/><path d="M12 7.500h12M12 11h12M12 15h12M17 3v16" stroke="#1d6b42"/><path d="M0 2.500L13 0v22L0 19.500z" fill="#1d6b42"/><text class="xl" x="3.500" y="15.500">X</text></svg></span>
  <span class="task active"><svg width="22" height="22" viewBox="0 0 24 24"><rect x=".5" y=".5" width="23" height="23" fill="#f8f8f8" stroke="#888"/><use href="#flake"/></svg></span>
  <span class="trayfill"></span>
  <span class="tray p1"><svg width="18" height="18" viewBox="0 0 18 18"><circle cx="12" cy="4.500" r="3" fill="none" stroke="#fff"/><circle cx="5.500" cy="8.500" r="3" fill="none" stroke="#fff"/><path d="M1 16c0-6 9-6 9 0M11 8.500c3 0 6 1 6 5" fill="none" stroke="#fff"/></svg></span>
  <span class="tray p2"><svg width="12" height="7" viewBox="0 0 12 7"><path d="M.5 6.500L6 1l5.500 5.500" fill="none" stroke="#fff"/></svg></span>
  <span class="tray p3"><svg width="16" height="16" viewBox="0 0 16 16"><rect width="16" height="16" fill="#4a4a4a"/><path d="M12 3H4v9h8V8H8" fill="none" stroke="#8ed116" stroke-width="2" stroke-dasharray="2 .7"/></svg></span>
  <span class="tray p4"><svg width="16" height="11" viewBox="0 0 16 11"><path d="M1 0v2M3 0v2M0 2h4v2.500H0zM2 4.500V7h3" fill="#fff" stroke="#fff"/><rect x="5.500" y="3.500" width="9.500" height="6" fill="#fff" stroke="#fff"/><path d="M15.500 5v3" stroke="#fff"/></svg></span>
  <span class="tray p5"><svg width="15" height="15" viewBox="0 0 15 15"><path d="M1 14a12 12 0 0 1 12-12M4 14a9 9 0 0 1 9-9M7 14a6 6 0 0 1 5-5" fill="none" stroke="#aaa"/><circle cx="12" cy="13" r="1.500" fill="#fff"/></svg></span>
  <span class="tray p6"><svg width="16" height="14" viewBox="0 0 16 14"><path d="M.5 4.500h3L7 1v12L3.500 9.500h-3z" fill="none" stroke="#fff"/><path d="M9.500 4.500a4 4 0 0 1 0 5M12 2.500a7 7 0 0 1 0 9M14 1a9 9 0 0 1 0 12" fill="none" stroke="#fff"/></svg></span>
  <span class="eng">ENG</span>
  <span class="clock"><span>04:33 PM</span><span>29-08-18</span></span>
  <span class="notif"><svg width="16" height="16" viewBox="0 0 16 16"><path d="M.5 1h15v12H10l-2 2.500L6 13H.5z" fill="none" stroke="#fff"/></svg></span>
  <span class="deskline"></span>
</footer>
</body>
</html>
```
FILE: styles.css
```css
* { box-sizing: border-box; }
html, body { margin: 0; padding: 0; }
body {
  width: 1366px; height: 768px; overflow: hidden; background: #fff;
  font-family: "Lato", "Liberation Sans", sans-serif; color: #555;
  display: flex; flex-direction: column;
}
.defs { position: absolute; }
i { font-style: normal; display: block; }

/* title + menu */
.titlebar { height: 22px; display: flex; align-items: center; padding-left: 2px; color: #111; font: 11.750px "Roboto", sans-serif; flex: none; }
.appicon { margin-right: 5px; }
.winbtns { margin-left: auto; display: flex; }
.winbtn { width: 46px; height: 22px; display: flex; align-items: center; justify-content: center; }
.menubar { height: 21px; display: flex; align-items: center; gap: 15.300px; padding-left: 8px; color: #111; font: 12px "Roboto", sans-serif; flex: none; }

/* toolbar */
.toolbar { height: 41px; background: #f3f3f3; display: flex; align-items: center; padding-left: 3px; flex: none; }
.tb { height: 30px; display: flex; align-items: center; justify-content: center; flex: none; }
.off svg, .off .caret { opacity: .35; }
.w8 { width: 8px; } .w12 { width: 12px; } .w26 { width: 26px; } .w28 { width: 28px; } .w30 { width: 30px; }
.w32 { width: 32px; } .w34 { width: 34px; } .w36 { width: 36px; } .w40 { width: 40px; }
.g1 { width: 1px; } .g2 { width: 2px; } .g3 { width: 3px; } .g4 { width: 4px; } .g5 { width: 5px; }
.g11 { width: 11px; } .g13 { width: 13px; }
.g1,.g2,.g3,.g4,.g5,.g11,.g13 { flex: none; }
.sep { width: 9px; height: 34px; flex: none; background: linear-gradient(#cfcfcf, #cfcfcf) center/1px 100% no-repeat; }
.active { background: #e4e4e4; }
.caret { width: 0; height: 0; border-left: 3.500px solid transparent; border-right: 3.500px solid transparent; border-top: 4px solid #666; }
.caret.dark { border-top-color: #555; border-left-width: 4px; border-right-width: 4px; }
.fitbox { width: 104px; height: 23px; border: 1px solid #ccc; border-radius: 2px; display: flex; flex: none; font-size: 13.200px; color: #555; }
.fitlabel { width: 85px; padding-left: 7px; line-height: 20px; border-right: 1px solid #ccc; white-space: nowrap; }
.fitarrow { flex: 1; display: flex; align-items: center; justify-content: center; }

/* workspace */
.workspace { height: 593px; display: flex; position: relative; flex: none; }
.sidebar { width: 210px; flex: none; background: #fafafa; border-right: 1px solid #ccc; display: flex; flex-direction: column; }
.sidetabs { height: 27px; display: flex; flex: none; }
.sidetab { font-size: 13.500px; line-height: 26px; }
.current { width: 114px; padding-left: 18px; font-size: 13.800px; font-weight: 700; color: #222; }
.other { flex: 1; border-left: 1px solid #ccc; border-bottom: 1px solid #ccc; padding-left: 12px; position: relative; color: #555; }
.updown { position: absolute; right: 7px; top: 9px; width: 0; height: 0; border-left: 3px solid transparent; border-right: 3px solid transparent; border-bottom: 3px solid #666; }
.updown::after { content: ""; position: absolute; left: -3px; top: 5px; border-left: 3px solid transparent; border-right: 3px solid transparent; border-top: 3px solid #666; }
.sec { border-bottom: 1px solid #ccc; flex: none; }
.device { height: 48px; padding: 12px 0 0 39px; }
.devbtn { display: block; width: 130px; height: 23px; border: 1px solid #ccc; border-radius: 2px; text-align: center; font-size: 12.300px; line-height: 21px; background: #f8f8f8; color: #666; }
.sidebar h3 { margin: 0; font-size: 13.500px; line-height: 16px; font-weight: 700; color: #444; }
.size { height: 74px; padding: 7px 0 0 18px; }
.sizepick { width: 173px; margin-top: 8px; height: 22px; border-bottom: 1px solid #ccc; font-size: 12.500px; color: #555; display: flex; align-items: center; justify-content: space-between; padding: 0 0 3px 1px; white-space: nowrap; }
.sheets { height: 240px; padding-top: 6px; }
.sheets h3 { padding-left: 18px; }
.sheetlist { list-style: none; margin: 12px 0 0; padding: 0; font-size: 13.300px; color: #555; }
.sheetlist li { height: 20px; display: flex; align-items: center; gap: 11px; padding-left: 18px; }
.sheetlist .sel { background: #e6e6e6; }
.sheetwrap { position: relative; display: flex; }
.check { position: absolute; left: 9px; top: 7px; width: 9px; height: 9px; border-radius: 50%; background: #3f87ad; display: flex; align-items: center; justify-content: center; }
.objects { padding: 6px 0 0 18px; flex: 1; }
.objgrid { display: grid; grid-template-columns: 99px 80px; grid-auto-rows: 22px; margin-top: 5px; }
.obj { display: flex; align-items: center; font-size: 11.300px; color: #666; white-space: nowrap; }
.obj svg, .aglyph { width: 15px; margin-right: 10px; flex: none; }
.aglyph { font-size: 18px; font-weight: 700; color: #666; line-height: 16px; text-align: center; }
.segment { display: flex; margin-top: 15px; width: 172px; height: 23px; font-size: 12.500px; }
.seg { flex: 1; text-align: center; line-height: 23px; border: 1px solid #ccc; color: #555; }
.seg.on { flex: none; width: 86px; background: #666; border-color: #666; color: #eee; }
.showtitle { display: flex; align-items: center; gap: 5px; margin-top: 14px; font-size: 13.500px; color: #666; }
.box { width: 15px; height: 15px; border: 1px solid #ccc; background: #fff; border-radius: 1px; }

.gutter { width: 6px; background: #f8f8f8; flex: none; }
.dash { width: 828px; flex: none; margin-top: 6px; border: 2px solid #999; border-bottom: 0; background: #fff; position: relative; padding: 0 7px 0 8px; }
.dashhandle { position: absolute; left: 387px; top: -1px; width: 50px; height: 13px; background: #999; border-radius: 0 0 2px 2px; display: flex; flex-direction: column; gap: 2px; padding: 4px 5px 0; }
.dashhandle i { height: 1px; background: #fff; }
.dashtitle { margin: 0; height: 51px; padding-top: 9px; font-size: 21px; font-weight: 300; letter-spacing: .9px; line-height: 26px; color: #444; }
.viz { height: 534px; background: #2d5a87; border: 1px solid #111; border-bottom: 0; padding: 7px; }
.vizlabel { font-size: 12px; color: #e6ecf2; letter-spacing: .3px; display: block; line-height: 18px; }
.legendcol { width: 166px; flex: none; background: #fff; padding-top: 13px; }
.legendhead { font-size: 12.700px; color: #444; padding-left: 2px; white-space: nowrap; line-height: 15px; }
.legendbar { margin: 7px 0 0 6px; height: 15px; background: #2d5a87; border: 1px solid #aaa; border-right: 0; border-left: 0; }
.legendval { padding-left: 72px; font: 13px "DejaVu Sans", sans-serif; color: #4f5a8c; margin-top: 3px; }
.rightcol { flex: 1; background: #f5f5f5; position: relative; }
.scrollthumb { position: absolute; right: 0; top: 16px; width: 4px; height: 413px; background: #cdcdcd; }
.scrolldown { position: absolute; right: 0; bottom: 0; width: 16px; height: 18px; border-left: 1px solid #ddd; display: flex; align-items: center; justify-content: center; }

.floatctl { position: absolute; left: 1043px; top: 6px; width: 20px; height: 62px; background: rgba(70,70,70,.62); border-radius: 0 2px 2px 0; display: flex; flex-direction: column; align-items: center; padding-top: 3px; gap: 7px; }
.floatctl svg:last-child { margin-top: 6px; }

.tooltip { position: absolute; left: 533px; top: 284px; width: 189px; height: 52px; background: #fff; border: 1px solid #ccc; box-shadow: 1px 2px 4px rgba(0,0,0,.45); padding: 6px 0 0 6px; display: grid; grid-template-columns: 124px 1fr; grid-auto-rows: 18px; font-size: 13.800px; align-items: center; }
.tk { color: #8a8a8a; white-space: nowrap; }
.tv { color: #333; }
.strong { font-weight: 700; }
.handcursor { position: absolute; left: 510px; top: 267px; }

.showme { position: absolute; left: 1158px; top: 0; width: 204px; height: 556px; background: #fafafa; border: 1px solid #ddd; border-right-color: #ccc; box-shadow: 2px 2px 3px rgba(0,0,0,.3); padding: 14px 0 0 13px; }
.showmetab { position: absolute; left: 92px; top: -37px; width: 111px; height: 37px; background: #fafafa; border: 1px solid #ddd; border-bottom: 0; display: flex; align-items: center; gap: 5px; padding: 0 0 7px 11px; font-size: 13.500px; color: #333; }
.thumbs { display: grid; grid-template-columns: repeat(3, 56px); grid-auto-rows: 42px; gap: 4px; }
.thumb { background: #fff; border: 1px solid #ddd; display: block; overflow: hidden; }
.thumb svg { display: block; width: 54px; height: 40px; }
.thumb.picked { border: 2px solid #de6a31; }
.thumb.picked svg { width: 52px; height: 38px; }
.thumb.faint svg { opacity: .55; }
.softln path { stroke-width: 1.500; }
.tiny text { font: 5px "Liberation Sans", sans-serif; fill: #555; }
.hint { padding: 15px 0 0 2px; font-size: 12.900px; color: #333; }
.hint p { margin: 0 0 8px; height: 20px; line-height: 20px; white-space: nowrap; }
.hint .lead { margin-bottom: 6px; }
.hint b { font-weight: 700; color: #222; }
.tight { letter-spacing: -.3px; }
.pill { display: inline-block; height: 20px; line-height: 20px; border-radius: 10px; color: #eef; padding: 0 11px; font-size: 13px; margin-left: -1px; }
.pill.blue { background: #4e98b5; }
.pill.green { background: #00b180; color: #efe; padding: 0 12px; }

/* bottom */
.tabsbar { height: 31px; background: #e6e6e6; border-top: 1px solid #ccc; display: flex; flex: none; font-size: 12.200px; color: #777; }
.wtab { border-right: 1px solid #ccc; display: flex; align-items: center; justify-content: center; gap: 6px; white-space: nowrap; flex: none; padding-bottom: 2px; }
.ds { width: 131px; justify-content: flex-start; padding-left: 9px; }
.s1 { width: 56px; } .s2 { width: 57px; }
.cur { width: 102px; background: #fff; font-weight: 700; color: #555; }
.add { width: 32px; padding-left: 2px; }
.statusbar { height: 20px; background: #ebebeb; border-top: 1px solid #ccc; display: flex; align-items: center; font-size: 11.400px; color: #333; flex: none; }
.st { white-space: nowrap; padding-bottom: 2px; }
.m { width: 54px; padding-left: 3px; letter-spacing: -.3px; } .r { width: 106px; letter-spacing: -.3px; }
.stfill { flex: 1; }
.stcell { height: 19px; border-left: 1px solid #ccc; flex: none; }
.c1 { width: 126px; } .c2 { width: 27px; } .c3 { width: 27px; } .c4 { width: 47px; }
.stnav { width: 70px; height: 19px; display: flex; align-items: center; justify-content: space-around; padding: 0 4px; border-left: 1px solid #ccc; border-right: 1px solid #ccc; flex: none; }
.stviews { width: 68px; display: flex; align-items: center; gap: 9px; padding-left: 8px; flex: none; }

.taskbar { height: 40px; background: #0a0a0a; display: flex; align-items: center; color: #fff; flex: none; }
.start { width: 48px; display: flex; justify-content: center; flex: none; }
.search { width: 344px; height: 40px; background: #f2f2f2; display: flex; align-items: center; padding-left: 9px; flex: none; }
.cortana { width: 22px; height: 22px; border: 3px solid #222; border-radius: 50%; flex: none; }
.searchtext { margin-left: 9px; font: 14px "Noto Sans", sans-serif; color: #333; }
.mic { margin-left: auto; margin-right: 15px; }
.task { height: 40px; display: flex; align-items: center; justify-content: center; flex: none; }
.t1 { width: 48px; } .t2 { width: 51px; } .t3 { width: 48px; } .t4 { width: 52px; } .t5 { width: 48px; } .t6 { width: 48px; } .t7 { width: 50px; }
.task.active { width: 48px; background: #3d3d3d; border-bottom: 2px solid #76b9ed; }
.xl { font: 700 11px "Liberation Sans", sans-serif; fill: #fff; }
.trayfill { flex: 1; }
.tray { display: flex; justify-content: center; align-items: center; height: 40px; flex: none; }
.p1 { width: 38px; } .p2 { width: 32px; } .p3 { width: 18px; } .p4 { width: 30px; } .p5 { width: 22px; } .p6 { width: 22px; }
.eng { width: 38px; text-align: center; font: 12.500px "Roboto", sans-serif; flex: none; margin-right: 3px; }
.clock { width: 52px; display: flex; flex-direction: column; align-items: center; font: 12px/19px "Roboto", sans-serif; flex: none; white-space: nowrap; }
.notif { width: 50px; display: flex; justify-content: center; flex: none; margin-right: 3px; }
.deskline { width: 5px; height: 40px; border-left: 1px solid #333; flex: none; }
```
